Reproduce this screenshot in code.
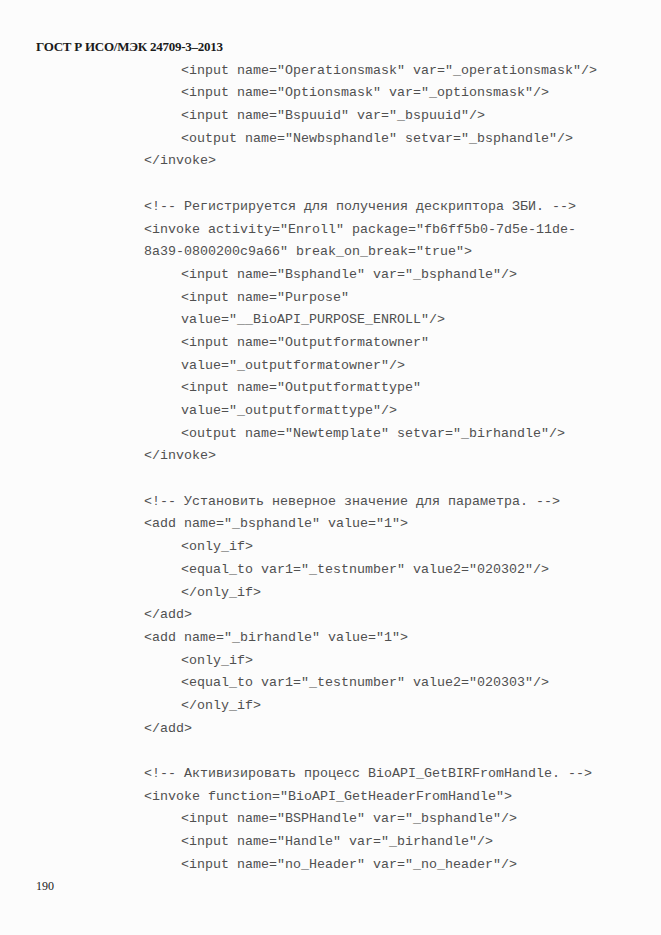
const lines = [
  [2, '<input name="Operationsmask" var="_operationsmask"/>'],
  [2, '<input name="Optionsmask" var="_optionsmask"/>'],
  [2, '<input name="Bspuuid" var="_bspuuid"/>'],
  [2, '<output name="Newbsphandle" setvar="_bsphandle"/>'],
  [1, "</invoke>"],
  [0, ""],
  [1, "<!-- Регистрируется для получения дескриптора ЗБИ. -->"],
  [1, '<invoke activity="Enroll" package="fb6ff5b0-7d5e-11de-'],
  [1, '8a39-0800200c9a66" break_on_break="true">'],
  [2, '<input name="Bsphandle" var="_bsphandle"/>'],
  [2, '<input name="Purpose"'],
  [2, 'value="__BioAPI_PURPOSE_ENROLL"/>'],
  [2, '<input name="Outputformatowner"'],
  [2, 'value="_outputformatowner"/>'],
  [2, '<input name="Outputformattype"'],
  [2, 'value="_outputformattype"/>'],
  [2, '<output name="Newtemplate" setvar="_birhandle"/>'],
  [1, "</invoke>"],
  [0, ""],
  [1, "<!-- Установить неверное значение для параметра. -->"],
  [1, '<add name="_bsphandle" value="1">'],
  [2, "<only_if>"],
  [2, '<equal_to var1="_testnumber" value2="020302"/>'],
  [2, "</only_if>"],
  [1, "</add>"],
  [1, '<add name="_birhandle" value="1">'],
  [2, "<only_if>"],
  [2, '<equal_to var1="_testnumber" value2="020303"/>'],
  [2, "</only_if>"],
  [1, "</add>"],
  [0, ""],
  [1, "<!-- Активизировать процесс BioAPI_GetBIRFromHandle. -->"],
  [1, '<invoke function="BioAPI_GetHeaderFromHandle">'],
  [2, '<input name="BSPHandle" var="_bsphandle"/>'],
  [2, '<input name="Handle" var="_birhandle"/>'],
  [2, '<input name="no_Header" var="_no_header"/>'],
];

export default function App() {
  return (
    <div className="min-h-[935px] w-[661px] bg-[#fcfcfc] pt-[36px] pl-[36px]">
      {/* running head */}
      <div className="h-[22.7px] leading-[22.7px] text-[13px] font-bold tracking-[-0.25px] text-[#1a1a1a] font-['Liberation_Serif',serif]">
        ГОСТ Р ИСО/МЭК 24709-3–2013
      </div>

      {/* listing */}
      <div className="font-['Liberation_Mono',monospace] text-[13.33px] text-[#505050]">
        {lines.map(([level, text], i) => (
          <div
            key={i}
            className={
              "h-[22.7px] leading-[23.7px] whitespace-pre " +
              (level === 2 ? "pl-[145px]" : level === 1 ? "pl-[108px]" : "")
            }
          >
            {text}
          </div>
        ))}
      </div>

      {/* page number */}
      <div className="h-[22.7px] leading-[22.7px] text-[12px] text-[#1a1a1a] font-['Liberation_Serif',serif]">
        190
      </div>
    </div>
  );
}
